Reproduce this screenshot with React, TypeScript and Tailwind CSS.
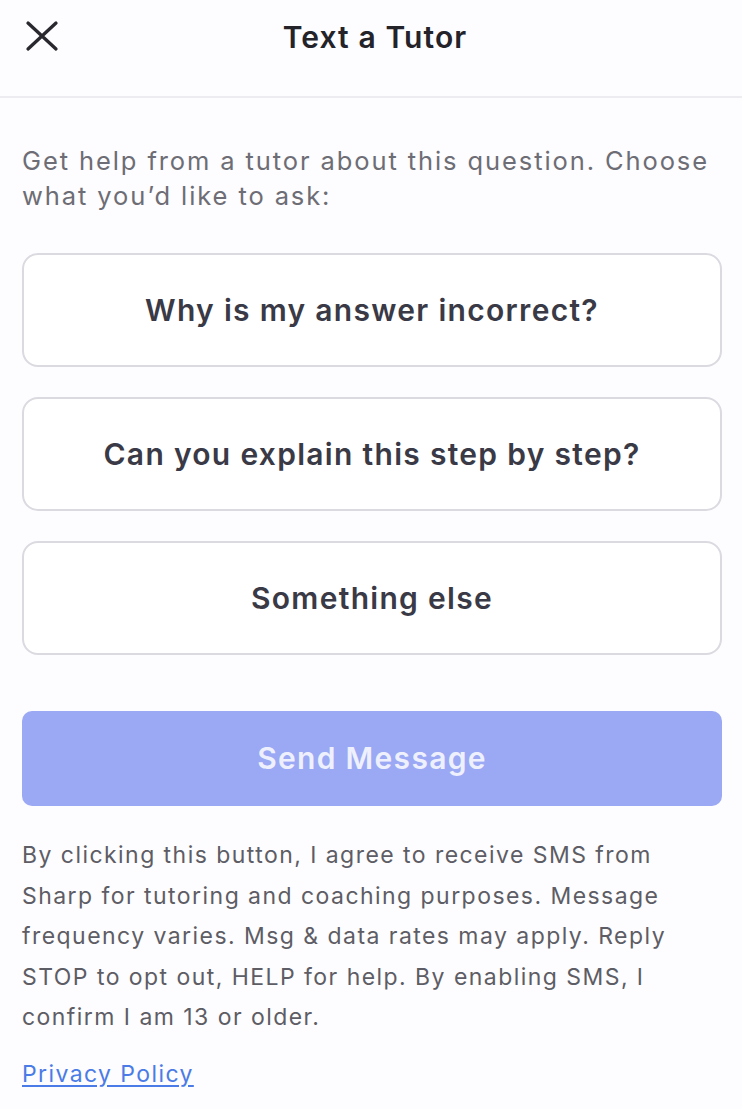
const options = [
  'Why is my answer incorrect?',
  'Can you explain this step by step?',
  'Something else',
];

function CloseIcon() {
  return (
    <svg width="36" height="34" viewBox="0 0 36 34" fill="none">
      <path d="M4 4 L32 30 M32 4 L4 30" stroke="#28282e" strokeWidth="3.3" strokeLinecap="round" />
    </svg>
  );
}

export default function App() {
  return (
    <div
      className="min-h-[1109px] w-full bg-[#fdfcfe] text-[#2f2f38]"
      style={{ fontFamily: 'Inter, "Noto Sans", sans-serif' }}
    >
      {/* Header */}
      <div className="relative flex h-[98px] items-start justify-center border-b-2 border-[#ededf1] pt-[18px] pl-[8px]">
        <button className="absolute left-[24px] top-[19px] p-0" aria-label="Close">
          <CloseIcon />
        </button>
        <h1 className="text-[30px] font-semibold leading-[38px] tracking-[1.1px] text-[#232329]">
          Text a Tutor
        </h1>
      </div>

      <div className="pl-[22px] pr-[20px]">
        <p className="mt-[45px] text-[25.5px] leading-[35px] tracking-[1.9px] text-[#6d6d75]">
          Get help from a tutor about this question. Choose what you’d like to ask:
        </p>

        <div className="mt-[40px] flex flex-col gap-[30px]">
          {options.map((opt) => (
            <button
              key={opt}
              className="flex h-[114px] w-full items-center justify-center rounded-[16px] border-2 border-[#dadae0] bg-white text-[30px] font-semibold tracking-[1.3px] text-[#3a3a47]"
            >
              {opt}
            </button>
          ))}
        </div>

        <button className="mt-[56px] flex h-[95px] w-full items-center justify-center rounded-[10px] bg-[#9ba8f4] text-[30px] font-semibold tracking-[1.3px] text-[#eef0fd]">
          Send Message
        </button>

        <p className="mt-[29px] text-[23px] leading-[40.5px] tracking-[1.45px] text-[#5d5d65]">
          By clicking this button, I agree to receive SMS from Sharp for tutoring and coaching
          purposes. Message frequency varies. Msg &amp; data rates may apply. Reply STOP to opt
          out, HELP for help. By enabling SMS, I confirm I am 13 or older.
        </p>

        <a
          href="#"
          className="mt-[20px] inline-block text-[23px] leading-[32px] tracking-[1.4px] text-[#4a7be6] underline underline-offset-[3px]"
        >
          Privacy Policy
        </a>
      </div>
    </div>
  );
}
